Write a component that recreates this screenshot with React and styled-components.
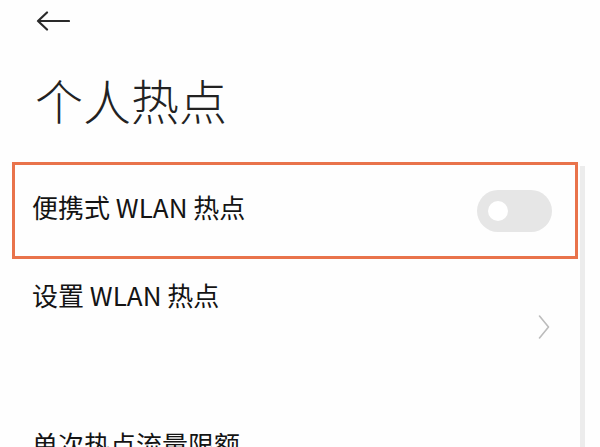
import styled, { createGlobalStyle } from "styled-components";

const GlobalStyle = createGlobalStyle`
  html, body {
    margin: 0;
    padding: 0;
    background: #fefefe;
  }
  body {
    font-family: "Noto Sans CJK SC", "Noto Sans", sans-serif;
    color: #1c1c1c;
  }
`

const Page = styled.div`
  width: 600px;
  height: 447px;
  overflow: hidden;
  display: flex;
  flex-direction: column;
`
const Header = styled.div`
  height: 44px;
  padding: 11px 0 0 36px;
  box-sizing: border-box;
`
const BackButton = styled.button`
  border: none;
  background: none;
  padding: 0;
  width: 34px;
  height: 22px;
  display: flex;
  color: #2a2a2a;
`
const Title = styled.h1`
  margin: 42px 0 0 35px;
  font-size: 48px;
  line-height: 48px;
  font-weight: 300;
  color: #222;
  letter-spacing: 0;
`
const Body = styled.div`
  display: flex;
  margin-top: 39px;
  flex: 1;
`
const List = styled.div`
  width: 566px;
  margin-left: 12px;
  display: flex;
  flex-direction: column;
`
const Strip = styled.div`
  width: 5px;
  margin: 4px 0 0 2px;
  background: #ececec;
`
const Row = styled.div`
  display: flex;
  justify-content: space-between;
  align-items: center;
  box-sizing: border-box;
  flex-shrink: 0;
  height: ${p => p.$height}px;
  padding: 0 23px 0 17px;
  border: 3px solid ${p => (p.$highlight ? "#e9734b" : "transparent")};
`
const TextCol = styled.div`
  display: flex;
  flex-direction: column;
  align-self: flex-start;
  padding-top: ${p => p.$padTop || 0}px;
`
const Label = styled.span`
  font-size: 26px;
  line-height: 36px;
  color: #141414;
  white-space: nowrap;
  margin-bottom: ${p => p.$lift || 0}px;
`
const Toggle = styled.div`
  width: 75px;
  height: 42px;
  border-radius: 21px;
  background: #e6e6e6;
  display: flex;
  align-items: center;
  padding-left: 11px;
  box-sizing: border-box;
`
const Knob = styled.div`
  width: 20px;
  height: 20px;
  border-radius: 50%;
  background: #fff;
`
const Chevron = styled.svg`
  width: 12px;
  height: 24px;
  margin-right: 2px;
`

const App = () => {
  return (
    <Page>
      <GlobalStyle />
      <Header>
        <BackButton aria-label="返回">
          <svg width="34" height="22" viewBox="0 0 34 22" fill="none">
            <path d="M2 10h31M11 1.5L2 10l9 8.5" stroke="currentColor" strokeWidth="2.2" strokeLinecap="round" strokeLinejoin="round" />
          </svg>
        </BackButton>
      </Header>
      <Title>个人热点</Title>
      <Body>
        <List>
          <Row $height={97} $highlight>
            <Label $lift={8}>便携式 WLAN 热点</Label>
            <Toggle>
              <Knob />
            </Toggle>
          </Row>
          <Row $height={136}>
            <TextCol $padTop={15}>
              <Label>设置 WLAN 热点</Label>
            </TextCol>
            <Chevron viewBox="0 0 12 24" fill="none">
              <path d="M1.5 1l9 11-9 11" stroke="#bcbcbc" strokeWidth="1.6" strokeLinecap="round" strokeLinejoin="round" />
            </Chevron>
          </Row>
          <Row $height={80}>
            <TextCol $padTop={28}>
              <Label>单次热点流量限额</Label>
            </TextCol>
          </Row>
        </List>
        <Strip />
      </Body>
    </Page>
  )
}

export default App
